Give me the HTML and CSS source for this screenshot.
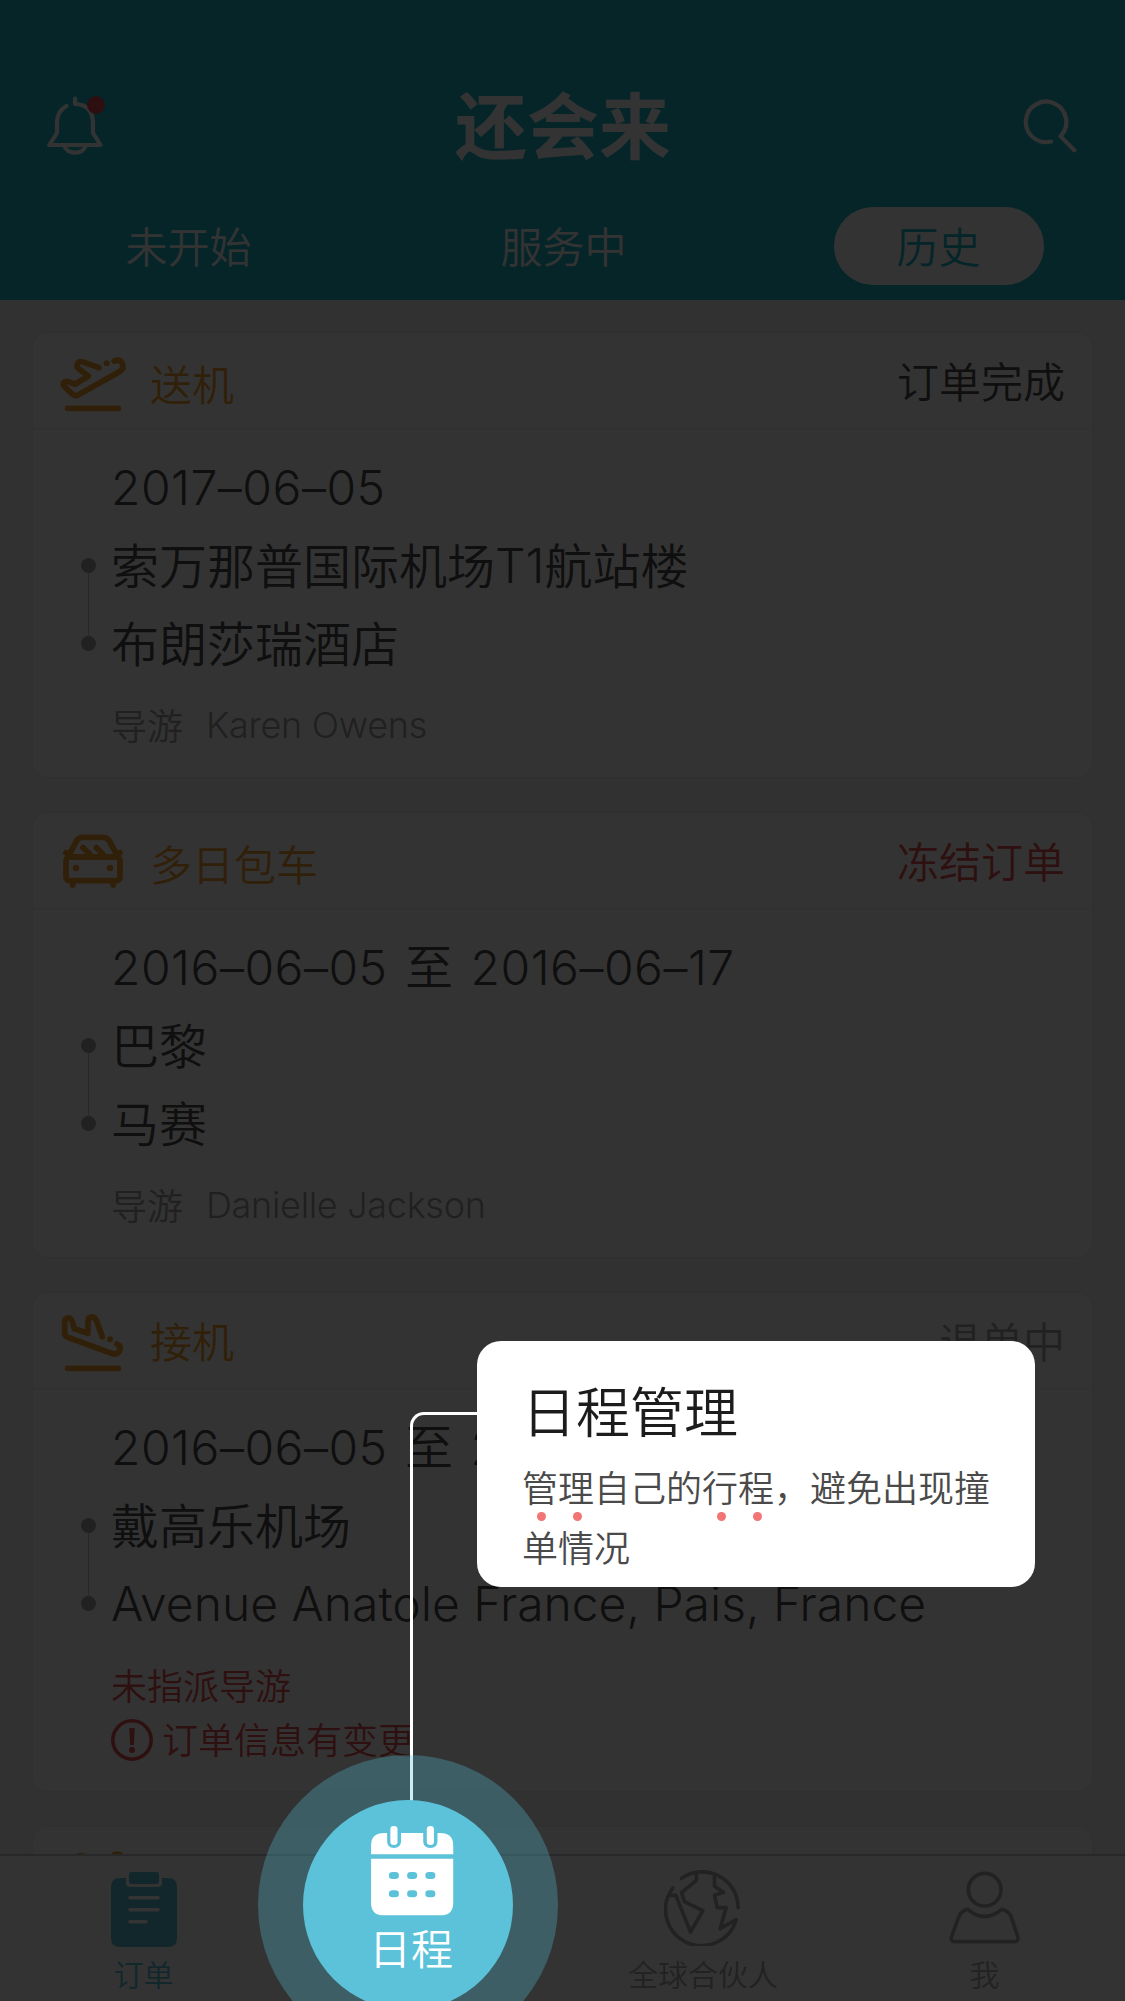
FILE: index.html
```html
<!DOCTYPE html>
<html lang="zh-CN">
<head>
<meta charset="utf-8">
<title>还会来</title>
<link rel="stylesheet" href="styles.css">
</head>
<body>
<svg class="defs" width="0" height="0" aria-hidden="true">
  <symbol id="takeoff" viewBox="117 98 204 178">
    <path d="M237 142 L189 125 Q174 120 171 134 Q170 141 177 146 L205 167 L165 192 L141 183 Q126 184 131 197 L158 222 Q165 229 174 224 L299 154 Q314 143 306 128 Q298 116 283 122"/>
    <path d="M143 264H295"/>
    <circle class="solid" cx="260" cy="129" r="9"/>
  </symbol>
  <symbol id="car" viewBox="117 98 204 178">
    <path d="M148 162 L169 123 Q175 111 187 111 H249 Q262 111 268 122 L290 162"/>
    <rect x="138" y="170" width="162" height="71" rx="11"/>
    <path d="M189 142L212 164M229 142L251 164M138 157L150 166M300 157L288 166M158 241V254M280 241V254"/>
    <circle class="solid" cx="168" cy="203" r="10"/>
    <circle class="solid" cx="270" cy="203" r="10"/>
  </symbol>
  <symbol id="landing" viewBox="117 98 204 178">
    <path d="M247 169 L230 123 Q225 110 215 110 Q204 111 204 124 V159 L163 145 L156 122 Q150 110 140 114 Q134 117 134 126 V159 Q134 167 143 171 L274 219 Q291 226 299 211 Q304 196 291 191"/>
    <path d="M143 264H295"/>
    <circle class="solid" cx="270" cy="177" r="9"/>
  </symbol>
</svg>

<div class="app">
  <header class="header">
    <div class="titlebar">
      <svg class="bell" viewBox="141 105 180 186">
        <path d="M199 138 Q171 154 171 188 V219 L148 255 H302 L279 219 V188 Q277 133 225 132 V116M193 258 A34 30 0 0 0 257 258"/>
        <circle cx="288" cy="135" r="27"/>
      </svg>
      <h1 class="logo">还会来</h1>
      <svg class="search" viewBox="820 118 160 160"><path d="M903 244 A60 60 0 1 1 931 228 L972 270"/></svg>
    </div>
    <nav class="filters">
      <span class="filter">未开始</span>
      <span class="filter">服务中</span>
      <span class="filter active">历史</span>
    </nav>
  </header>

  <main class="orders">
    <article class="card">
      <div class="card-head">
        <svg class="kind-icon"><use href="#takeoff"/></svg>
        <span class="kind low">送机</span>
        <span class="status">订单完成</span>
      </div>
      <div class="card-body">
        <div class="date"><span class="num">2017–06–05</span></div>
        <div class="stop first">索万那普国际机场<span class="latin">T1</span>航站楼</div>
        <div class="stop">布朗莎瑞酒店</div>
        <div class="guide"><span>导游</span><span class="name">Karen Owens</span></div>
      </div>
    </article>

    <article class="card">
      <div class="card-head">
        <svg class="kind-icon"><use href="#car"/></svg>
        <span class="kind low">多日包车</span>
        <span class="status alert">冻结订单</span>
      </div>
      <div class="card-body">
        <div class="date"><span class="num">2016–06–05</span> 至 <span class="num">2016–06–17</span></div>
        <div class="stop first">巴黎</div>
        <div class="stop">马赛</div>
        <div class="guide"><span>导游</span><span class="name">Danielle Jackson</span></div>
      </div>
    </article>

    <article class="card">
      <div class="card-head">
        <svg class="kind-icon"><use href="#landing"/></svg>
        <span class="kind">接机</span>
        <span class="status muted">退单中</span>
      </div>
      <div class="card-body">
        <div class="date"><span class="num">2016–06–05</span> 至 <span class="num">2016–06–17</span></div>
        <div class="stop first">戴高乐机场</div>
        <div class="stop"><span class="latin">Avenue Anatole France, Pais, France</span></div>
        <div class="guide alert">未指派导游</div>
        <div class="guide notice alert">
          <svg class="warn" viewBox="0 0 42 42"><circle cx="21" cy="21" r="19.200"/><path d="M18.300 9h5.400l-.8 17h-3.800z"/><circle class="point" cx="21" cy="31" r="3"/></svg>
          <span>订单信息有变更</span>
        </div>
      </div>
    </article>

    <article class="card">
      <div class="card-head">
        <svg class="kind-icon"><use href="#takeoff"/></svg>
      </div>
    </article>
  </main>

  <footer class="tabbar">
    <div class="tab current">
      <svg class="clipboard" viewBox="111 1872 66 75">
        <path d="M120 1878H126V1883Q126 1887 130 1887H158Q162 1887 162 1883V1878H168Q177 1878 177 1887V1938Q177 1947 168 1947H120Q111 1947 111 1938V1887Q111 1878 120 1878Z"/>
        <rect x="129" y="1872" width="30" height="12" rx="2.500"/>
        <path class="lines" d="M130 1897.700H158M130 1909.700H158M130 1921.700H146"/>
      </svg>
      <span>订单</span>
    </div>
    <div class="tab"></div>
    <div class="tab">
      <svg class="globe" viewBox="190 268 230 232">
        <path d="M242 296 A108 108 0 0 1 412 384M216 325 A108 108 0 1 0 406 420 L358 447 L376 384 H349 L341 347 L368 338 L341 320 V284M287 280 V302 L242 339 L251 366 L306 393 L269 457 L225 347 H205"/>
      </svg>
      <span>全球合伙人</span>
    </div>
    <div class="tab">
      <svg class="person" viewBox="1032 268 230 232">
        <circle cx="1147.500" cy="330" r="49"/>
        <path d="M1097 389 Q1147 432 1199 389 Q1219 394 1227 411 L1247 472 Q1249 486 1237 486 H1057 Q1045 486 1048 472 L1070 411 Q1078 393 1097 389Z"/>
      </svg>
      <span>我</span>
    </div>
  </footer>

  <div class="scrim"></div>

  <div class="guide-line"></div>
  <div class="halo"></div>
  <div class="spot">
    <svg class="calendar" viewBox="980 555 236 274" preserveAspectRatio="none">
      <path d="M983 643V616Q983 579 1020 579H1028V604Q1028 624 1047 624T1067 604V579H1129V604Q1129 624 1149 624T1169 604V579H1176Q1213 579 1213 616V643Z"/>
      <path d="M983 656H1213V788Q1213 826 1178 826H1018Q983 826 983 788Z"/>
      <rect x="1037" y="558" width="20" height="57" rx="10"/>
      <rect x="1139" y="558" width="20" height="57" rx="10"/>
      <g class="days">
        <rect x="1033" y="696" width="28" height="21" rx="10"/><rect x="1084" y="696" width="28" height="21" rx="10"/><rect x="1135" y="696" width="28" height="21" rx="10"/>
        <rect x="1033" y="751" width="28" height="21" rx="10"/><rect x="1084" y="751" width="28" height="21" rx="10"/><rect x="1135" y="751" width="28" height="21" rx="10"/>
      </g>
    </svg>
    <span>日程</span>
  </div>
  <section class="tip">
    <h2>日程管理</h2>
    <p><i>管</i><i>理</i>自己的<i>行</i><i>程</i>，避免出现撞单情况</p>
  </section>
</div>
</body>
</html>
```
FILE: styles.css
```css
* { box-sizing: border-box; }

body {
  margin: 0;
  font-family: Inter, "Noto Sans CJK SC", sans-serif;
  font-weight: 350;
  color: #4c4c4c;
}

.defs { position: absolute; }

.app {
  position: relative;
  display: flex;
  flex-direction: column;
  width: 1125px;
  height: 2001px;
  overflow: hidden;
  background: #f5f5f5;
}

/* header */
.header {
  flex: none;
  height: 300px;
  padding-top: 81px;
  background: #1eb7cb;
  color: #fff;
}

.titlebar {
  display: flex;
  align-items: center;
  justify-content: space-between;
  height: 90px;
  padding: 0 48px 0 47px;
}

.bell { width: 60px; height: 62px; }
.bell path, .search path {
  fill: none;
  stroke: #fff;
  stroke-width: 12.5;
  stroke-linecap: round;
  stroke-linejoin: round;
}
.bell circle { fill: #e64c55; }
.search { width: 54px; height: 54px; }

.logo {
  margin: 2px 4px 0 0;
  font-size: 72px;
  line-height: 90px;
  font-weight: 700;
}

.filters {
  display: grid;
  grid-template-columns: repeat(3, 375px);
  justify-items: center;
  margin: 36px 0 0 1px;
}

.filter {
  width: 210px;
  height: 78px;
  border-radius: 39px;
  font-size: 42px;
  line-height: 81px;
  text-align: center;
}
.filter.active { background: #fff; color: #1eb7cb; }

/* order list */
.orders {
  flex: 1;
  min-height: 0;
  display: flex;
  flex-direction: column;
  gap: 36px;
  padding: 33px 33px 0;
  overflow: hidden;
}

.card {
  flex: none;
  border-radius: 15px;
  background: #fff;
  box-shadow: 0 0 6px rgba(0, 0, 0, .05);
}

.card-head {
  display: flex;
  align-items: center;
  height: 97px;
  padding: 0 27px 0 26px;
  border-bottom: 2px solid #f2f2f2;
  font-size: 42px;
  line-height: 60px;
}

.kind-icon {
  width: 68px;
  height: 59.3px;
  margin-top: 4px;
  color: #f5a030;
  fill: none;
  stroke: currentColor;
  stroke-width: 17.5;
  stroke-linecap: round;
  stroke-linejoin: round;
}
.solid { fill: currentColor; stroke: none; }

.kind { margin-left: 23px; padding-top: 4px; color: #f5a030; }
.kind.low { padding-top: 10px; }
.status { margin-left: auto; padding-top: 4px; }

.alert { color: #e6504f; }
.muted { color: #a5a5a5; }

.card-body { padding: 18px 20px 25px 78px; }

.date, .stop {
  height: 78px;
  font-size: 48px;
  line-height: 79px;
  white-space: nowrap;
}

.date { word-spacing: 4px; }
.num { font-kerning: none; letter-spacing: .5px; }
.latin { position: relative; top: -1px; }
.name { letter-spacing: -.3px; }

.stop { position: relative; line-height: 81px; }
.stop::before {
  content: "";
  position: absolute;
  left: -30px;
  top: 32px;
  width: 15px;
  height: 15px;
  border-radius: 50%;
  background: #a5a5a5;
}
.stop.first::after {
  content: "";
  position: absolute;
  left: -23px;
  top: 47px;
  width: 1px;
  height: 63px;
  background: #c8c8c8;
}

.guide {
  display: flex;
  align-items: center;
  gap: 23px;
  height: 54px;
  font-size: 36px;
  line-height: 54px;
  color: #a0a0a0;
}
.guide span { padding-top: 3px; }
.guide .name { padding-top: 0; }
.stop + .guide { margin-top: 16px; }
.stop + .guide.alert { padding-top: 3px; }
.guide.alert { color: #e6504f; }
.notice { gap: 9px; }
.warn { width: 42px; height: 42px; margin-top: 1px; fill: currentColor; }
.warn circle { fill: none; stroke: currentColor; stroke-width: 3.6; }
.warn .point { fill: currentColor; stroke: none; }

/* tab bar */
.tabbar {
  flex: none;
  display: grid;
  grid-template-columns: repeat(4, 1fr);
  height: 147px;
  border-top: 2px solid #c8c8c8;
  background: #fff;
}

.tab {
  display: flex;
  flex-direction: column;
  align-items: center;
  padding: 13px 0 0;
  font-size: 30px;
  line-height: 40px;
  color: #a8a8a8;
}
.tab span { margin-top: 9px; }
.tab.current { color: #5bc2d9; padding: 16px 0 0 6px; }

.clipboard { width: 66px; height: 75px; fill: currentColor; }
.tab.current span { margin-top: 8px; }
.clipboard .lines { stroke: #fff; stroke-width: 3.6; stroke-linecap: round; }
.globe, .person {
  width: 77px;
  height: 77.3px;
  fill: none;
  stroke: currentColor;
  stroke-width: 11;
  stroke-linecap: round;
  stroke-linejoin: round;
}
.globe { margin-right: 1px; }

/* coach mark */
.scrim {
  position: absolute;
  inset: 0;
  background: rgba(0, 0, 0, .8);
}

.guide-line {
  position: absolute;
  left: 410px;
  top: 1412px;
  width: 70px;
  height: 400px;
  border: solid #fff;
  border-width: 3px 0 0 3px;
  border-top-left-radius: 14px;
}

.halo {
  position: absolute;
  left: 258px;
  top: 1755px;
  width: 300px;
  height: 300px;
  border-radius: 50%;
  background: rgba(91, 194, 217, .3);
}

.spot {
  position: absolute;
  left: 303px;
  top: 1800px;
  display: flex;
  flex-direction: column;
  align-items: center;
  width: 210px;
  height: 210px;
  padding: 25px 0 0 8px;
  border-radius: 50%;
  background: #5bc2d9;
  color: #fff;
  font-size: 42px;
  line-height: 60px;
}
.calendar { width: 84.3px; height: 91.3px; fill: #fff; }
.spot span { margin: 4px 2px 0 0; }
.days { fill: #5bc2d9; }

.tip {
  position: absolute;
  left: 477px;
  top: 1341px;
  width: 558px;
  height: 246px;
  padding: 38px 40px 0 45px;
  border-radius: 24px;
  background: #fff;
}
.tip h2 {
  margin: 0;
  font-size: 54px;
  line-height: 70px;
  font-weight: 350;
  color: #1c1c1c;
}
.tip p {
  margin: 10px 0 0;
  font-size: 36px;
  line-height: 60px;
  color: #4a4a4a;
}
.tip i { position: relative; font-style: normal; }
.tip i::after {
  content: "";
  position: absolute;
  left: 15px;
  bottom: -10px;
  width: 9px;
  height: 9px;
  border-radius: 50%;
  background: #f27474;
}
```
